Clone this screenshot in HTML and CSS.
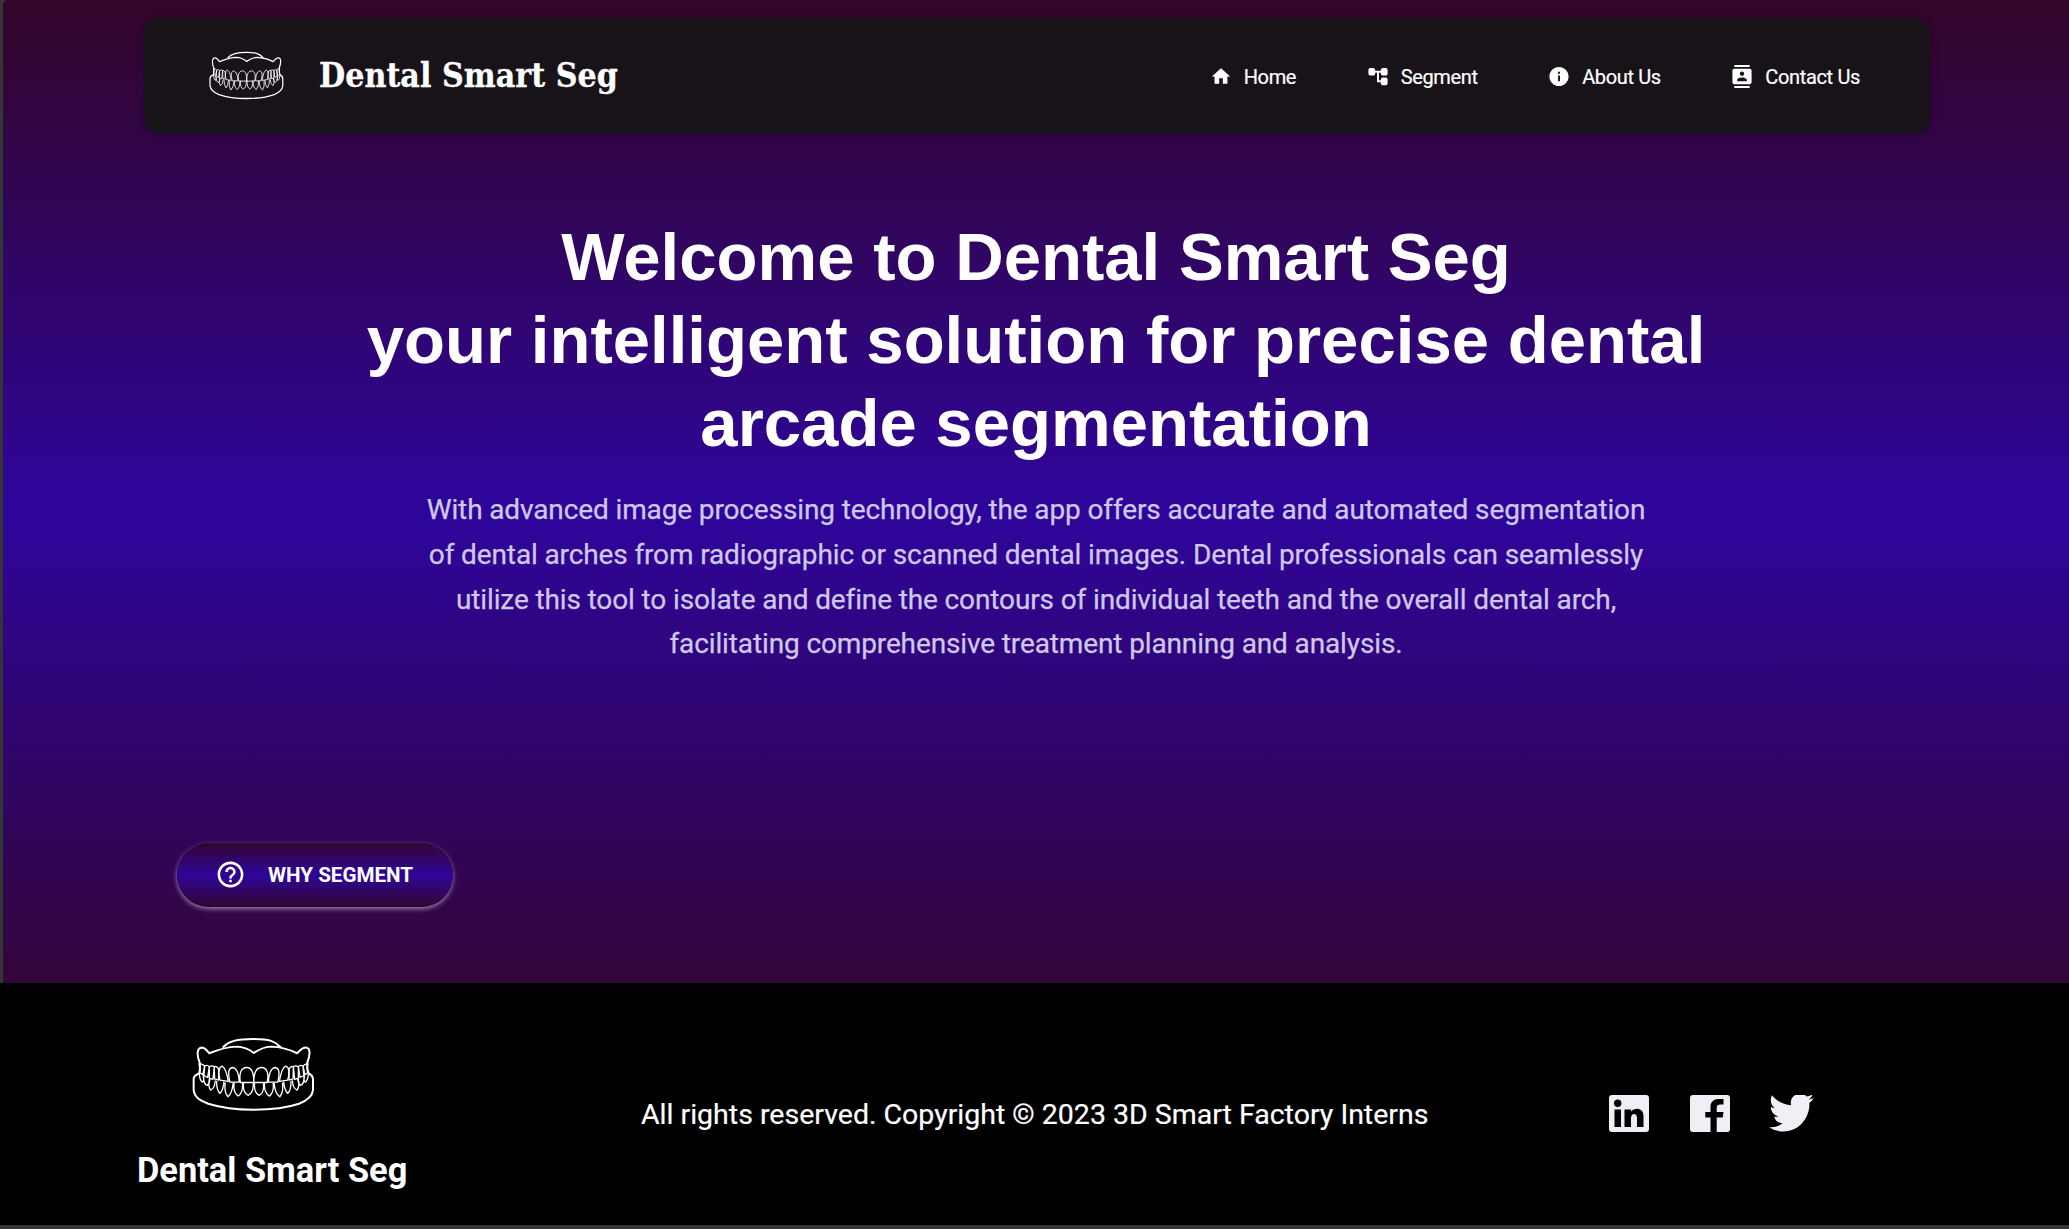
FILE: index.html
```html
<!DOCTYPE html>
<html lang="en">
<head>
<meta charset="utf-8">
<title>Dental Smart Seg</title>
<link rel="stylesheet" href="styles.css">
</head>
<body>
<svg class="defs" aria-hidden="true">
  <symbol id="teeth" viewBox="216 80 370 226" preserveAspectRatio="none">
    <g fill="none" stroke="#fff" stroke-linejoin="round" stroke-linecap="round">
      <g stroke-width="6">
        <path d="M310 110C326 93 350 86 400 86S466 93 482 110"/>
        <path d="M240 160C234 145 230 127 236 117Q245 107 257 117L268 129C300 116 320 110 350 109C378 110 392 120 402 128C415 120 430 109 455 109C482 110 510 118 532 129L545 117Q558 107 567 116C573 128 568 145 562 160"/>
        <path d="M238 161Q242 178 237 190Q220 196 221 208V240C224 262 240 272 265 281C300 292 340 299 400 299S505 292 538 281C563 271 578 260 580 240V208Q580 196 567 190Q561 178 564 161"/>
      </g>
      <g stroke-width="4">
        <path d="M241 162Q248 160 254 168Q262 162 268 170Q276 164 283 170Q290 166 296 176M562 162Q556 160 550 168Q542 162 536 170Q528 164 521 170Q514 166 508 176"/>
        <path d="M241 164L240 188L248 194L254 168L252 196L263 202L268 170L268 204L279 208L283 170L284 206L296 210L296 176M562 164L564 188L556 194L550 168L552 196L541 202L536 170L536 204L525 208L521 170L520 206L508 210L508 176"/>
        <path d="M300 210C294 185 298 170 306 168C318 172 322 195 325 214ZM330 216C324 190 324 174 338 172C352 174 358 196 358 216ZM362 217C356 190 364 172 381 172S402 190 402 217ZM402 217C402 190 408 172 425 172S448 190 442 217ZM446 216C446 196 452 174 466 172C480 174 480 190 474 216ZM479 214C482 195 486 172 498 168C508 170 510 185 504 210Z"/>
        <path d="M238 192Q240 214 248 216Q254 206 250 196M250 200Q252 224 262 226Q270 218 270 206M268 208Q264 230 272 240Q284 236 286 212M290 214Q290 240 300 250Q310 240 312 216M316 219Q312 246 324 260Q336 252 340 219M343 219Q338 244 355 258Q370 248 368 219M371 219Q368 248 385 256Q402 248 400 219M404 219Q402 248 418 256Q434 248 431 219M434 219Q432 248 449 258Q464 244 460 219M463 219Q466 252 480 260Q492 246 488 219M492 216Q494 240 504 250Q514 240 514 214M518 212Q520 236 532 240Q540 230 536 208M534 206Q534 218 542 226Q552 224 554 200M554 196Q550 206 556 216Q564 214 566 192"/>
      </g>
    </g>
  </symbol>
</svg>

<main class="hero">
  <header class="navbar">
    <svg class="navbar-logo"><use href="#teeth"/></svg>
    <span class="navbar-title">Dental Smart Seg</span>
    <nav class="nav-links">
      <a class="nav-link home"><svg viewBox="0 0 24 24"><path d="M10 20v-6h4v6h5v-8h3L12 3 2 12h3v8z"/></svg><span>Home</span></a>
      <a class="nav-link segment"><svg viewBox="0 0 24 24"><rect x="2" y="3" width="7" height="8" rx="2"/><rect x="15" y="3" width="7" height="8" rx="2"/><rect x="15" y="13" width="7" height="8" rx="2"/><path d="M8 6h8v2h-3v8h3v2h-5V8H8z"/></svg><span>Segment</span></a>
      <a class="nav-link about"><svg viewBox="0 0 24 24"><path d="M12 2C6.480 2 2 6.480 2 12s4.480 10 10 10 10-4.480 10-10S17.520 2 12 2zm1 15h-2v-6h2v6zm0-8h-2V7h2v2z"/></svg><span>About Us</span></a>
      <a class="nav-link contact"><svg viewBox="0 0 24 24"><path d="M20 0H4v2h16V0zM4 24h16v-2H4v2zM20 4H4c-1.100 0-2 .9-2 2v12c0 1.100.9 2 2 2h16c1.100 0 2-.9 2-2V6c0-1.100-.9-2-2-2zm-8 2.750c1.240 0 2.250 1.010 2.250 2.250s-1.010 2.250-2.250 2.250S9.750 10.240 9.750 9 10.760 6.750 12 6.750zM17 17H7v-1.500c0-1.670 3.330-2.500 5-2.500s5 .83 5 2.500V17z"/></svg><span>Contact Us</span></a>
    </nav>
  </header>

  <section class="intro">
    <h1 class="headline">Welcome to Dental Smart Seg<br>your intelligent solution for precise dental<br>arcade segmentation</h1>
    <p class="lead">With advanced image processing technology, the app offers accurate and automated segmentation<br>of dental arches from radiographic or scanned dental images. Dental professionals can seamlessly<br>utilize this tool to isolate and define the contours of individual teeth and the overall dental arch,<br>facilitating comprehensive treatment planning and analysis.</p>
  </section>

  <button class="why-button">
    <svg viewBox="0 0 24 24"><path d="M11 18h2v-2h-2v2zm1-16C6.480 2 2 6.480 2 12s4.480 10 10 10 10-4.480 10-10S17.520 2 12 2zm0 18c-4.410 0-8-3.590-8-8s3.590-8 8-8 8 3.590 8 8-3.590 8-8 8zm0-14c-2.210 0-4 1.790-4 4h2c0-1.100.9-2 2-2s2 .9 2 2c0 2-3 1.750-3 5h2c0-2.250 3-2.500 3-5 0-2.210-1.790-4-4-4z"/></svg>
    <span>WHY SEGMENT</span>
  </button>
</main>

<footer class="footer">
  <div class="footer-brand">
    <svg class="footer-logo"><use href="#teeth"/></svg>
    <span class="footer-name">Dental Smart Seg</span>
  </div>
  <p class="copyright">All rights reserved. Copyright © 2023 3D Smart Factory Interns</p>
  <div class="socials">
    <svg class="social" viewBox="0 0 40 37" preserveAspectRatio="none"><path fill-rule="evenodd" d="M3 0h34q3 0 3 3v31q0 3-3 3H3q-3 0-3-3V3q0-3 3-3zM5.500 14.500v17.500h6.500V14.500zM8.700 4.600a3.700 3.700 0 1 0 .01 7.400A3.700 3.700 0 0 0 8.700 4.600zM15.500 14.500V32h6.500v-9c0-5 6-5.500 6 0v9h6.500V21c0-8-8.500-9-12.500-4.500v-2z"/></svg>
    <svg class="social" viewBox="0 0 40 37" preserveAspectRatio="none"><path d="M3 0h34q3 0 3 3v31q0 3-3 3H26.700V22.500h6l.8-5.500h-6.800v-4c0-2.500 1.300-3.500 3.500-3.500h3.300V4h-5c-5 0-8 3-8 8v5h-5.200v5.500h5.200V37H3q-3 0-3-3V3q0-3 3-3z"/></svg>
    <svg class="social bird" viewBox="0 3 24 19" preserveAspectRatio="none"><path d="M23.950 4.570a10 10 0 0 1-2.820.77 4.960 4.960 0 0 0 2.160-2.720c-.95.56-2 .96-3.130 1.180a4.920 4.920 0 0 0-8.380 4.480C7.690 8.090 4.070 6.130 1.640 3.160a4.820 4.820 0 0 0-.67 2.480c0 1.710.87 3.210 2.190 4.100a4.900 4.900 0 0 1-2.230-.62v.06a4.920 4.920 0 0 0 3.950 4.830 5 5 0 0 1-2.210.08 4.940 4.940 0 0 0 4.600 3.420A9.870 9.870 0 0 1 0 19.540a13.990 13.990 0 0 0 7.550 2.210c9.050 0 14-7.500 14-13.980 0-.21 0-.42-.02-.63a9.940 9.940 0 0 0 2.420-2.570z"/></svg>
  </div>
</footer>
</body>
</html>
```
FILE: styles.css
```css
* { box-sizing: border-box; }
body {
  margin: 0;
  height: 1229px;
  display: flex;
  flex-direction: column;
  background: #353535;
  color: #fff;
  font-family: Roboto, sans-serif;
}
.defs { display: none; }
svg { fill: #fff; flex: none; }

.hero {
  height: 983px;
  margin-left: 3px;
  padding: 18px 139px 0 141px;
  border-top-left-radius: 5px;
  background: linear-gradient(#330528, #2e059c 52%, #33053a);
}
.navbar {
  height: 115px;
  padding: 0 70px 0 65px;
  display: flex;
  align-items: center;
  border-radius: 15px;
  background: #171318;
  box-shadow: 0 2px 6px rgba(20, 0, 40, .5);
}
.navbar-logo { width: 75px; height: 49px; }
.navbar-title {
  margin-left: 35px;
  font: bold 33.500px "DejaVu Serif Condensed", "DejaVu Serif", serif;
  font-stretch: condensed;
  letter-spacing: .05px;
  -webkit-text-stroke: .3px #fff;
}
.nav-links { margin-left: auto; display: flex; padding-top: 2px; }
.nav-link {
  display: flex;
  align-items: center;
  gap: 11px;
  margin-left: 69.500px;
  font-size: 20px;
  line-height: 28px;
  letter-spacing: -.35px;
  -webkit-text-stroke: .2px #fff;
}
.nav-link svg { width: 24px; height: 23px; }
.nav-link.home { gap: 12px; }
.nav-link.home svg { width: 22px; }

.intro { text-align: center; }
.headline {
  margin: 82px 0 0 -2px;
  font: bold 67.130px/83px "Liberation Sans", Arial, sans-serif;
}
.lead {
  margin: 24px 0 0 -2px;
  font-size: 28px;
  line-height: 44.800px;
  letter-spacing: -.125px;
  color: #d0c8ea;
  -webkit-text-stroke: .25px #d0c8ea;
}
.why-button {
  display: flex;
  align-items: center;
  gap: 22px;
  width: 276px;
  height: 64px;
  margin: 176px 0 0 33px;
  padding: 0 38px 1px;
  border: 0;
  border-radius: 32px;
  color: #fff;
  background: linear-gradient(#33062f, #2f059a, #33062f);
  box-shadow: 0 2px 5px rgba(255, 255, 255, .5);
  font: bold 20.600px Roboto, sans-serif;
  white-space: nowrap;
}
.why-button svg { width: 31px; height: 31px; }

.footer {
  height: 242px;
  padding: 0 255px 0 137px;
  display: flex;
  background: #000;
}
.footer-brand {
  width: 270px;
  padding-top: 54px;
  display: flex;
  flex-direction: column;
}
.footer-logo { width: 123px; height: 75px; margin-left: 55px; }
.footer-name {
  margin-top: 36px;
  font-weight: bold;
  font-size: 34.400px;
  line-height: 44px;
  white-space: nowrap;
}
.copyright {
  margin: 111px 0 0 234px;
  font-size: 28.500px;
  line-height: 42px;
  white-space: nowrap;
  -webkit-text-stroke: .2px #fff;
}
.socials {
  margin: 112px 0 0 auto;
  display: flex;
  gap: 41px;
}
.social { width: 40px; height: 37px; fill: #eff0f6; }
.social.bird { width: 45px; margin-left: -2px; }
```
